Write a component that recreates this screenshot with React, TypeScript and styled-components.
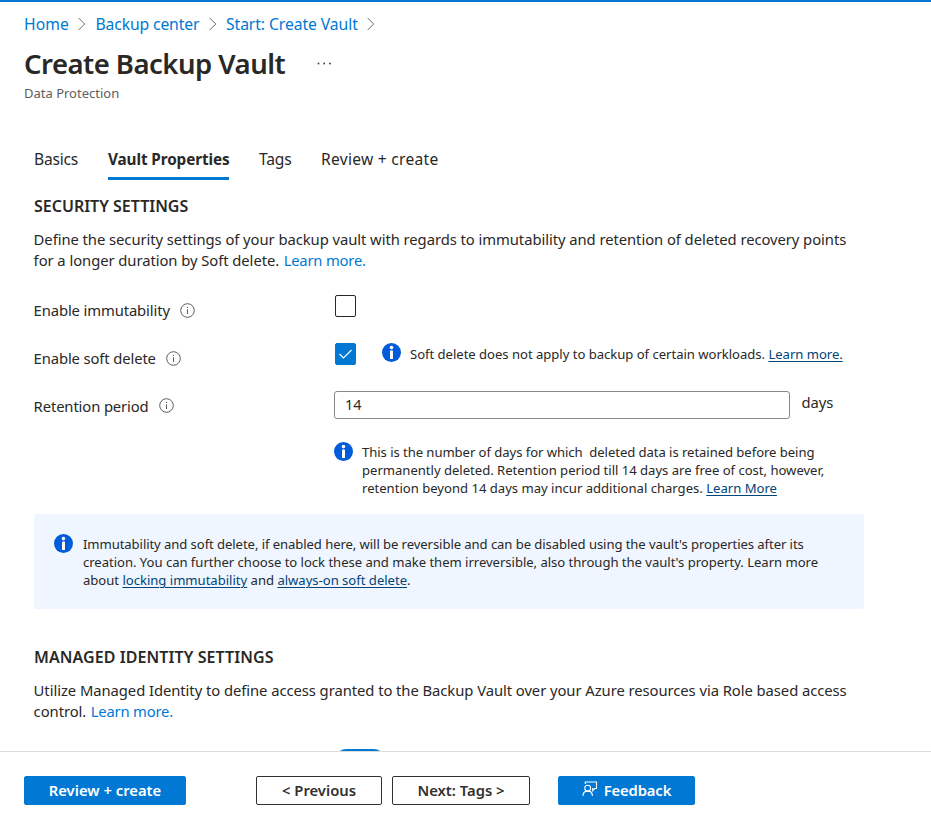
import React from "react";
import styled, { createGlobalStyle, css } from "styled-components";

const GlobalStyle = createGlobalStyle`
  * { box-sizing: border-box; }
  body {
    margin: 0;
    background: #fff;
    color: #292827;
    font-family: "Noto Sans", "Open Sans", sans-serif;
    overflow: hidden;
  }
`;

const Page = styled.div`
  width: 931px;
  height: 832px;
  display: flex;
  flex-direction: column;
  border-top: 2px solid #0078d4;
`;

const Content = styled.main`
  height: 749px;
  overflow: hidden;
  white-space: nowrap;
`;

const Header = styled.header`
  padding: 11px 24px 0;
`;

const Breadcrumb = styled.nav`
  display: flex;
  align-items: center;
  height: 22px;
  line-height: 22px;
  font-size: 15.7px;
`;

const Crumb = styled.a<{ $w: number; $track: number }>`
  width: ${(p) => p.$w}px;
  letter-spacing: ${(p) => p.$track}px;
  color: #0078d4;
`;

const ChevronIcon = styled.svg`
  width: 8px;
  height: 14px;
  margin: 0 9.5px 0 9px;
  fill: none;
  stroke: #6b6967;
`;

const TitleRow = styled.div`
  display: flex;
  margin-top: 11px;
  height: 36px;
`;

const Title = styled.h1`
  margin: 0;
  width: 293px;
  font-size: 27.5px;
  line-height: 36px;
  font-weight: 600;
  letter-spacing: -0.52px;
`;

const MoreIcon = styled.svg`
  width: 15px;
  height: 3px;
  margin-top: 16px;
  fill: #3b3a39;
`;

const Subtitle = styled.div`
  margin-top: 2px;
  font-size: 13px;
  line-height: 18px;
  color: #605e5c;
`;

const TabList = styled.div`
  display: flex;
  gap: 30px;
  height: 33px;
  margin: 45px 0 0 34px;
`;

const Tab = styled.div<{ $w: number; $track: number; $active?: boolean }>`
  width: ${(p) => p.$w}px;
  height: 33px;
  font-size: 15.6px;
  line-height: 24px;
  letter-spacing: ${(p) => p.$track}px;
  ${(p) =>
    p.$active &&
    css`
      font-weight: 700;
      font-size: 15.3px;
      border-bottom: 3px solid #0078d4;
    `}
`;

const Section = styled.section<{ $top: number }>`
  margin: ${(p) => p.$top}px 34px 0;
`;

const SectionTitle = styled.h2<{ $track?: number }>`
  margin: 0;
  font-size: 16px;
  line-height: 22px;
  font-weight: 600;
  letter-spacing: ${(p) => p.$track ?? 0}px;
`;

const Paragraph = styled.p`
  margin: 12px 0 0 -0.4px;
  font-size: 14.8px;
  line-height: 21px;
  letter-spacing: -0.06px;
`;

const Link = styled.a`
  margin-left: 0.7px;
  letter-spacing: -0.2px;
  color: #0078d4;
`;

const DarkLink = styled.a`
  color: #004578;
  text-decoration: underline;
  text-underline-offset: 2px;
  text-decoration-thickness: 1px;
`;

const Form = styled.div`
  margin-top: 24px;
`;

const Row = styled.div`
  display: grid;
  grid-template-columns: 300px 1fr;
  height: 48px;
`;

const Label = styled.label<{ $lift?: number }>`
  display: flex;
  gap: 10.5px;
  margin-left: -0.4px;
  padding-top: 4px;
  font-size: 14.8px;
  line-height: 22px;
  letter-spacing: -0.12px;
  svg {
    margin-top: ${(p) => 4 - (p.$lift ?? 0)}px;
  }
`;

const HintSvg = styled.svg`
  width: 15px;
  height: 15px;
  flex: none;
`;

const Control = styled.div`
  display: flex;
  align-items: flex-start;
`;

const Checkbox = styled.span<{ $checked?: boolean }>`
  display: flex;
  align-items: center;
  justify-content: center;
  width: 21px;
  height: 22px;
  margin-left: 1px;
  border: 1px solid ${(p) => (p.$checked ? "#0078d4" : "#292827")};
  border-radius: 2px;
  background: ${(p) => (p.$checked ? "#0078d4" : "#fff")};
`;

const Note = styled.div<{ $gap: number; $left?: number }>`
  display: flex;
  gap: ${(p) => p.$gap}px;
  margin-left: ${(p) => p.$left ?? 0}px;
`;

const NoteText = styled.div<{ $top?: number }>`
  margin-top: ${(p) => p.$top ?? 1}px;
  font-size: 13.1px;
  line-height: 18px;
  letter-spacing: -0.03px;
`;

const NoteLine = styled.div<{ $track: number }>`
  letter-spacing: ${(p) => p.$track}px;
`;

const BadgeSvg = styled.svg`
  width: 19px;
  height: 19px;
  flex: none;
`;

const Input = styled.input`
  width: 456px;
  height: 28px;
  padding: 0 10px 1px;
  border: 1px solid #8a8886;
  border-radius: 3px;
  outline: none;
  color: #292827;
  font: 14.4px "Noto Sans", sans-serif;
`;

const Unit = styled.span`
  margin-left: 11.5px;
  font-size: 14.8px;
  line-height: 22px;
  letter-spacing: -0.1px;
`;

const RetentionNote = styled.div`
  margin: 3px 0 0 300px;
  height: 72px;
`;

const Callout = styled.div`
  width: 830px;
  height: 95px;
  padding: 20px;
  border-radius: 2px;
  background: #f0f6ff;
`;

const Toggle = styled.div`
  width: 52px;
  height: 25px;
  margin: 27px 0 0 300px;
  border-radius: 13px;
  background: #0078d4;
`;

const Footer = styled.footer`
  display: flex;
  flex: 1;
  padding: 24px 24px 0;
  border-top: 1px solid #dddcdb;
`;

const Button = styled.button<{ $w: number; $left?: number; $primary?: boolean; $track?: number }>`
  display: flex;
  align-items: center;
  justify-content: center;
  width: ${(p) => p.$w}px;
  height: 29px;
  margin-left: ${(p) => p.$left ?? 0}px;
  padding: 0;
  border: 1px solid ${(p) => (p.$primary ? "#0078d4" : "#323130")};
  border-radius: 2px;
  background: ${(p) => (p.$primary ? "#0078d4" : "#fff")};
  color: ${(p) => (p.$primary ? "#fff" : "#323130")};
  font: 600 14.8px/27px "Noto Sans", sans-serif;
  letter-spacing: ${(p) => p.$track ?? 0}px;
  white-space: pre;
`;

const FeedbackSvg = styled.svg`
  width: 16px;
  height: 16px;
  margin: -4px 6px 0 0;
  fill: none;
  stroke: #fff;
  stroke-width: 1.1;
`;

const Chevron = () => (
  <ChevronIcon viewBox="0 0 8 14">
    <path d="M.7 1l6 6-6 6" />
  </ChevronIcon>
);

const Hint = () => (
  <HintSvg viewBox="0 0 15 15">
    <circle cx="7.5" cy="7.5" r="6.8" fill="none" stroke="#605e5c" />
    <path d="M7.5 6.3v4.7" stroke="#605e5c" />
    <circle cx="7.5" cy="4.4" r=".7" fill="#605e5c" />
  </HintSvg>
);

const InfoBadge = () => (
  <BadgeSvg viewBox="0 0 19 19">
    <circle cx="9.5" cy="9.5" r="9.5" fill="#015cda" />
    <rect x="8" y="7.4" width="3" height="8.6" rx=".5" fill="#fff" />
    <circle cx="9.5" cy="4.6" r="1.8" fill="#fff" />
  </BadgeSvg>
);

export default function App() {
  return (
    <>
      <GlobalStyle />
      <Page>
        <Content>
          <Header>
            <Breadcrumb>
              <Crumb $w={45} $track={0.1}>Home</Crumb>
              <Chevron />
              <Crumb $w={104} $track={-0.12}>Backup center</Crumb>
              <Chevron />
              <Crumb $w={132} $track={-0.07}>Start: Create Vault</Crumb>
              <Chevron />
            </Breadcrumb>
            <TitleRow>
              <Title>Create Backup Vault</Title>
              <MoreIcon viewBox="0 0 15 3">
                <circle cx="1.5" cy="1.5" r=".9" />
                <circle cx="7.2" cy="1.5" r=".9" />
                <circle cx="12.9" cy="1.5" r=".9" />
              </MoreIcon>
            </TitleRow>
            <Subtitle>Data Protection</Subtitle>
          </Header>

          <TabList>
            <Tab $w={44} $track={-0.2}>Basics</Tab>
            <Tab $w={121} $track={-0.1} $active>Vault Properties</Tab>
            <Tab $w={32} $track={-0.15}>Tags</Tab>
            <Tab $w={118} $track={0.27}>Review + create</Tab>
          </TabList>

          <Section $top={15}>
            <SectionTitle>SECURITY SETTINGS</SectionTitle>
            <Paragraph>
              Define the security settings of your backup vault with regards to immutability and retention of deleted recovery points
              <br />
              for a longer duration by Soft delete. <Link>Learn more.</Link>
            </Paragraph>

            <Form>
              <Row>
                <Label>Enable immutability<Hint /></Label>
                <Control><Checkbox /></Control>
              </Row>
              <Row>
                <Label>Enable soft delete<Hint /></Label>
                <Control>
                  <Checkbox $checked>
                    <svg width="15" height="12" viewBox="0 0 15 12" fill="none" stroke="#fff" strokeWidth="1.1">
                      <path d="M1.500 6l4 4L13.500 2" />
                    </svg>
                  </Checkbox>
                  <Note $gap={9} $left={26}>
                    <InfoBadge />
                    <NoteText $top={2}>
                      Soft delete does not apply to backup of certain workloads. <DarkLink>Learn more.</DarkLink>
                    </NoteText>
                  </Note>
                </Control>
              </Row>
              <Row>
                <Label $lift={1}>Retention period<Hint /></Label>
                <Control>
                  <Input defaultValue="14" />
                  <Unit>days</Unit>
                </Control>
              </Row>
            </Form>

            <RetentionNote>
              <Note $gap={9}>
                <InfoBadge />
                <NoteText>
                  <NoteLine $track={-0.06}>
                    This is the number of days for which&nbsp; deleted data is retained before being
                  </NoteLine>
                  <NoteLine $track={-0.02}>
                    permanently deleted. Retention period till 14 days are free of cost, however,
                  </NoteLine>
                  <NoteLine $track={-0.01}>
                    retention beyond 14 days may incur additional charges. <DarkLink>Learn More</DarkLink>
                  </NoteLine>
                </NoteText>
              </Note>
            </RetentionNote>

            <Callout>
              <Note $gap={10}>
                <InfoBadge />
                <NoteText>
                  <NoteLine $track={-0.08}>
                    Immutability and soft delete, if enabled here, will be reversible and can be disabled using the vault's properties after its
                  </NoteLine>
                  <NoteLine $track={-0.035}>
                    creation. You can further choose to lock these and make them irreversible, also through the vault's property. Learn more
                  </NoteLine>
                  <NoteLine $track={-0.02}>
                    about <DarkLink>locking immutability</DarkLink> and <DarkLink>always-on soft delete</DarkLink>.
                  </NoteLine>
                </NoteText>
              </Note>
            </Callout>
          </Section>

          <Section $top={37}>
            <SectionTitle $track={0.08}>MANAGED IDENTITY SETTINGS</SectionTitle>
            <Paragraph>
              Utilize Managed Identity to define access granted to the Backup Vault over your Azure resources via Role based access
              <br />
              control. <Link>Learn more.</Link>
            </Paragraph>
            <Toggle />
          </Section>
        </Content>

        <Footer>
          <Button $w={162} $primary>Review + create</Button>
          <Button $w={126} $left={70}>{"< Previous"}</Button>
          <Button $w={138} $left={10}>{"Next: Tags >"}</Button>
          <Button $w={137} $left={28} $primary $track={-0.15}>
            <FeedbackSvg viewBox="0 0 16 16">
              <circle cx="5.700" cy="7.200" r="2.900" />
              <path d="M1 15c0-2.900 2-4.900 4.700-4.900s4.700 2 4.700 4.900M3.300 3V1h11.200v6.500h-1.700l-2 2.300V7.500H10" />
            </FeedbackSvg>
            Feedback
          </Button>
        </Footer>
      </Page>
    </>
  );
}
